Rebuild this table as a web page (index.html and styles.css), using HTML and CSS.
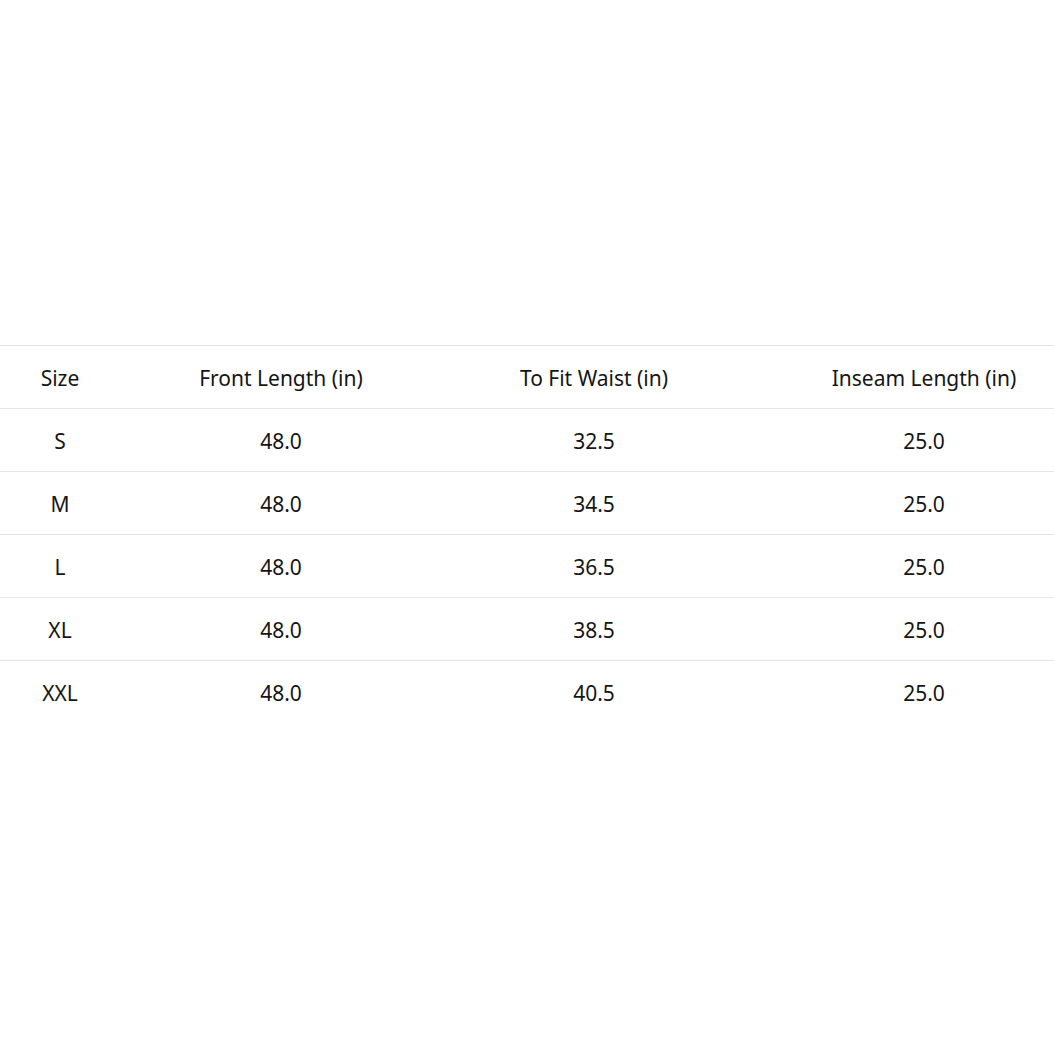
FILE: index.html
```html
<!DOCTYPE html>
<html>
<head>
<meta charset="utf-8">
<link rel="stylesheet" href="styles.css">
</head>
<body>
<div class="page">
  <table class="size-table">
    <colgroup>
      <col class="c1"><col class="c2"><col class="c3"><col class="c4">
    </colgroup>
    <thead>
      <tr><th>Size</th><th>Front Length (in)</th><th>To Fit Waist (in)</th><th>Inseam Length (in)</th></tr>
    </thead>
    <tbody>
      <tr><td>S</td><td>48.0</td><td>32.5</td><td>25.0</td></tr>
      <tr><td>M</td><td>48.0</td><td>34.5</td><td>25.0</td></tr>
      <tr><td>L</td><td>48.0</td><td>36.5</td><td>25.0</td></tr>
      <tr><td>XL</td><td>48.0</td><td>38.5</td><td>25.0</td></tr>
      <tr class="last"><td>XXL</td><td>48.0</td><td>40.5</td><td>25.0</td></tr>
    </tbody>
  </table>
</div>
</body>
</html>
```
FILE: styles.css
```css
html, body {
  margin: 0;
  padding: 0;
  background: #fff;
  overflow: hidden;
}
.page {
  width: 1054px;
  height: 1054px;
  overflow: hidden;
  padding-top: 345px;
  box-sizing: border-box;
}
.size-table {
  border-collapse: collapse;
  table-layout: fixed;
  width: 1102px;
  font-family: "Noto Sans", "Liberation Sans", sans-serif;
  font-size: 21px;
  color: #151515;
}
.c1 { width: 120px; }
.c2 { width: 322px; }
.c3 { width: 304px; }
.c4 { width: 356px; }
.size-table th,
.size-table td {
  height: 60px;
  padding: 2px 0 0 0;
  text-align: center;
  vertical-align: middle;
  font-weight: 400;
  border-top: 1px solid #e6e6e6;
}
```
